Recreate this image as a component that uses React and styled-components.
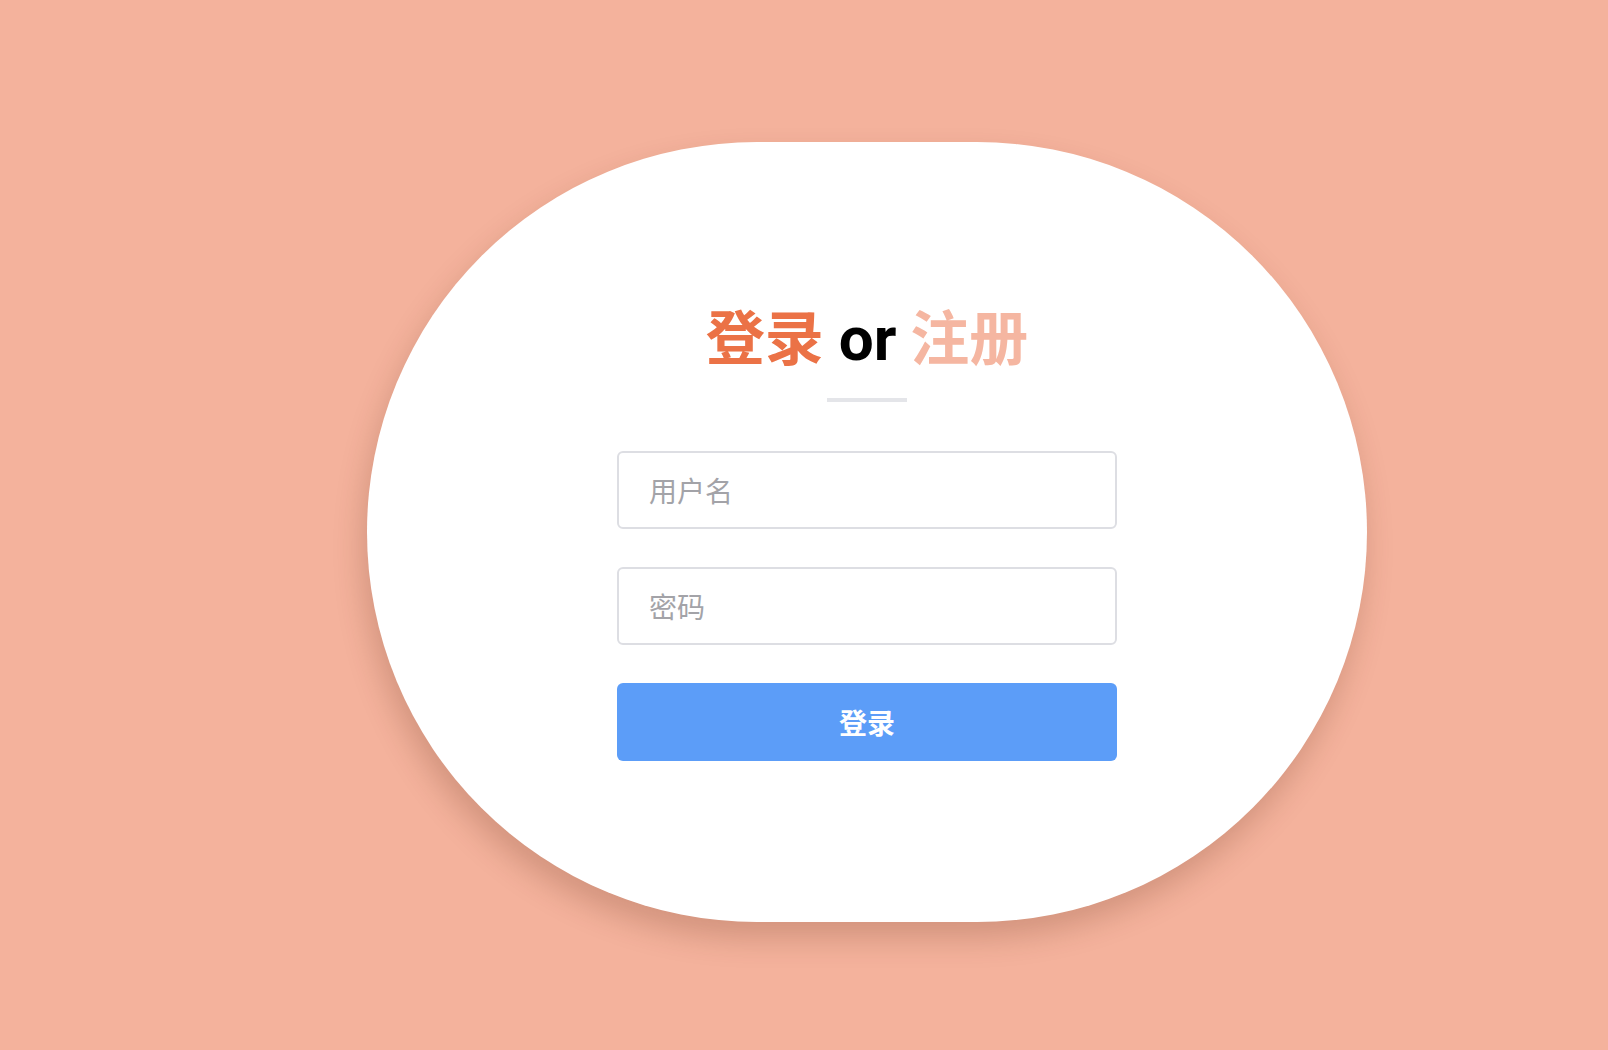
import React from "react";
import styled, { createGlobalStyle } from "styled-components";

const GlobalStyle = createGlobalStyle`
  html, body {
    margin: 0;
    padding: 0;
    background: #f4b29c;
  }
  body {
    font-family: "Liberation Sans", "Noto Sans CJK SC", sans-serif;
  }
  * {
    box-sizing: border-box;
  }
`;

const Page = styled.div`
  min-height: 100vh;
  padding: 142px 0 0 367px;
  background: #f4b29c;
`;

const Card = styled.div`
  width: 1000px;
  height: 780px;
  background: #fff;
  border-radius: 400px;
  box-shadow: -4px 16px 30px rgba(90, 40, 20, 0.22);
  display: flex;
  flex-direction: column;
  align-items: center;
  padding-top: 158px;
`;

const Title = styled.h1`
  margin: 0;
  height: 70px;
  line-height: 70px;
  font-size: 59px;
  font-weight: 700;
  font-family: "Noto Sans CJK SC", sans-serif;
  white-space: nowrap;
`;

const Word = styled.span`
  color: ${(p) => p.color};
`;

const Or = styled.span`
  font-family: Roboto, "Liberation Sans", sans-serif;
  font-size: 62px;
  font-weight: 700;
  color: #000;
  margin: 0 14px 0 15px;
`;

const Bar = styled.div`
  width: 80px;
  height: 4px;
  background: #e4e5e9;
  margin-top: 28px;
`;

const Form = styled.form`
  width: 500px;
  margin-top: 49px;
  display: flex;
  flex-direction: column;
  gap: 38px;
`;

const Input = styled.input`
  width: 100%;
  height: 78px;
  border: 2px solid #dddee3;
  border-radius: 6px;
  padding: 0 30px;
  font-size: 28px;
  font-family: "Noto Sans CJK SC", sans-serif;
  color: #333;
  outline: none;
  background: #fff;

  &::placeholder {
    color: #a3a3a8;
  }
`;

const Button = styled.button`
  width: 100%;
  height: 78px;
  border: none;
  border-radius: 6px;
  background: #5c9df8;
  color: #fff;
  font-size: 28px;
  font-weight: 700;
  font-family: "Noto Sans CJK SC", sans-serif;
  cursor: pointer;
`;

export default function App() {
  return (
    <>
      <GlobalStyle />
      <Page>
        <Card>
          <Title>
            <Word color="#eb7246">登录</Word>
            <Or>or</Or>
            <Word color="#f5b6a1">注册</Word>
          </Title>
          <Bar />
          <Form onSubmit={(e) => e.preventDefault()}>
            <Input placeholder="用户名" />
            <Input placeholder="密码" type="password" />
            <Button type="submit">登录</Button>
          </Form>
        </Card>
      </Page>
    </>
  );
}
